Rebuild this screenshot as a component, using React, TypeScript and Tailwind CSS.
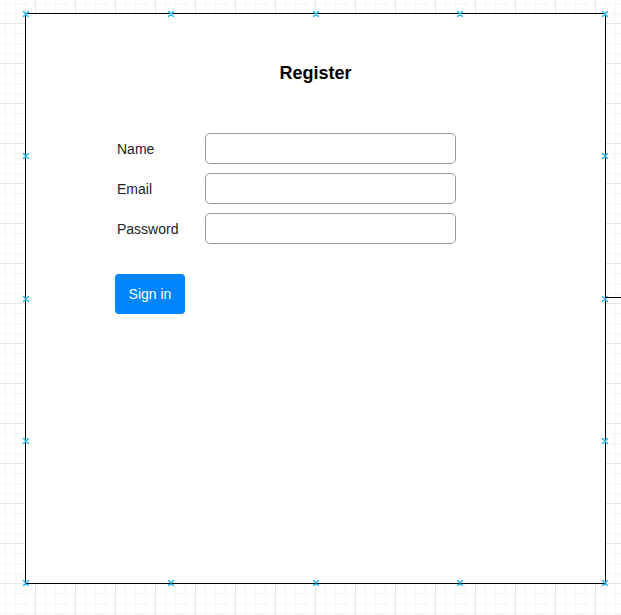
import React from 'react';

const Handle: React.FC<{ className: string }> = ({ className }) => (
  <svg
    className={`absolute -translate-x-1/2 -translate-y-1/2 ${className}`}
    width="7"
    height="7"
    viewBox="0 0 7 7"
  >
    <path d="M1 1L6 6M6 1L1 6" stroke="#29b6f2" strokeWidth="1.6" strokeLinecap="round" />
  </svg>
);

const fields = ['Name', 'Email', 'Password'];

const App: React.FC = () => {
  return (
    <div className="min-h-[615px] w-full overflow-hidden bg-white bg-[linear-gradient(to_right,#e6e6e6_1px,transparent_1px),linear-gradient(to_bottom,#e6e6e6_1px,transparent_1px),linear-gradient(to_right,#f5f5f5_1px,transparent_1px),linear-gradient(to_bottom,#f5f5f5_1px,transparent_1px)] bg-size-[40px_40px,40px_40px,10px_10px,10px_10px] bg-position-[35px_23px,35px_23px,5px_3px,5px_3px] pl-[25px] pt-[13px] font-['Liberation_Sans',Arial,sans-serif]">
      <div className="relative h-[571px] w-[581px] border border-black bg-white">
        {/* Register form */}
        <h1 className="mt-[49px] text-center text-[18px] font-bold leading-5 text-black">Register</h1>

        <div className="mt-[50px] flex flex-col gap-[9px] pl-[89px]">
          {fields.map((f) => (
            <div key={f} className="flex items-center">
              <label className="ml-[2px] w-[88px] pt-[2px] text-[14px] text-[#222]">{f}</label>
              <div className="h-[31px] w-[251px] rounded-[5px] border border-[#999] bg-white" />
            </div>
          ))}
        </div>

        <div className="mt-[30px] pl-[89px]">
          <button className="flex h-10 w-[70px] items-center justify-center rounded-[4px] bg-[#0085fc] pt-[1px] text-[14px] text-white">
            Sign in
          </button>
        </div>

        {/* selection handles */}
        <Handle className="left-0 top-0" />
        <Handle className="left-1/4 top-0" />
        <Handle className="left-1/2 top-0" />
        <Handle className="left-3/4 top-0" />
        <Handle className="left-full top-0" />
        <Handle className="left-0 top-1/4" />
        <Handle className="left-0 top-1/2" />
        <Handle className="left-0 top-3/4" />
        <Handle className="left-0 top-full" />
        <Handle className="left-full top-1/4" />
        <Handle className="left-full top-1/2" />
        <Handle className="left-full top-3/4" />
        <Handle className="left-full top-full" />
        <Handle className="left-1/4 top-full" />
        <Handle className="left-1/2 top-full" />
        <Handle className="left-3/4 top-full" />

        {/* connector edge leaving the right side */}
        <div className="absolute left-full top-[283px] h-px w-[20px] bg-black" />
      </div>
    </div>
  );
};

export default App;
